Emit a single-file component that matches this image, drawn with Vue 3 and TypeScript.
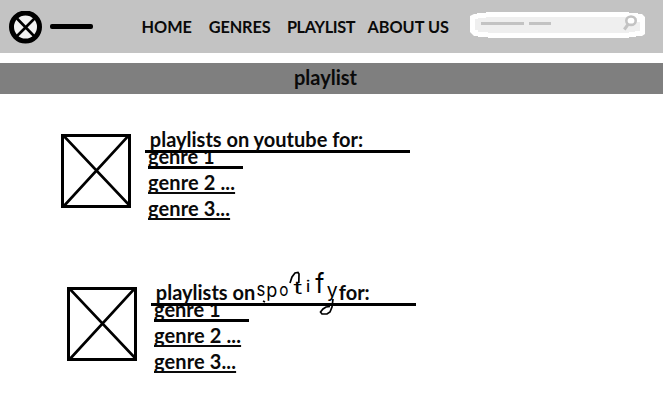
<script setup lang="ts">
interface Section {
  id: string
  before: string
  service?: string
  after?: string
  genres: string[]
}

const links: string[] = ['HOME', 'GENRES', 'PLAYLIST', 'ABOUT US']

const sections: Section[] = [
  { id: 'youtube', before: 'playlists on youtube for:', genres: ['genre 1', 'genre 2 ...', 'genre 3...'] },
  {
    id: 'spotify',
    before: 'playlists on',
    service: 'spotify',
    after: 'for:',
    genres: ['genre 1', 'genre 2 ...', 'genre 3...'],
  },
]

// Uneven placement of each handwritten letter: x, baseline, font size, horizontal stretch
const scribble: [number, number, number, number][] = [
  [1.6, 31, 18.5, 0.9],
  [11.2, 31.5, 19, 0.95],
  [24.2, 31, 18, 0.85],
  [38.6, 29, 17, 1.6],
  [50.8, 27, 16, 1.2],
  [60.2, 28, 26, 0.95],
  [71.8, 31.8, 19.5, 1],
]
</script>

<template>
  <div class="page">
    <header class="topbar">
      <svg class="logo" width="33" height="33" viewBox="0 0 33 33">
        <circle cx="16.5" cy="16" r="14" fill="#f2f2f2" stroke="#000" stroke-width="5" />
        <path d="M8 7.5 25 25M25.5 7.5 8 25" stroke="#000" stroke-width="2.6" />
      </svg>
      <span class="brand-line"></span>
      <nav class="nav">
        <a v-for="(link, i) in links" :key="link" :class="'link-' + i">{{ link }}</a>
      </nav>
      <svg class="search" width="176" height="27" viewBox="0 0 176 27">
        <path d="M7 1H16V0H159V1H168V2H172L175 5V22L172 24H166V25H159V26H18V25H8V24H4L0 20V4L4 2H7Z" fill="#fff" />
        <path d="M8 6H16V5H159V6H167V10H170V19H165V20H159V21H18V20H8V18H5V7H8Z" fill="#efefef" />
        <path d="M11 11.5H54M59 11.5H81" stroke="#c3c3c3" stroke-width="3" />
        <ellipse cx="161" cy="8.7" rx="4.7" ry="4.2" fill="#fff" stroke="#c3c3c3" stroke-width="2.6" />
        <path d="M158 12.5 154.3 17.5" stroke="#c3c3c3" stroke-width="3" />
      </svg>
    </header>

    <h1 class="title">playlist</h1>

    <main>
      <section v-for="s in sections" :key="s.id" class="card" :class="s.id">
        <svg class="thumb" width="70" height="74" viewBox="0 0 70 74">
          <rect x="1.5" y="1.5" width="67" height="71" fill="none" stroke="#000" stroke-width="3" />
          <path d="M1 0 69 72M69 0 2 73" stroke="#000" stroke-width="2.6" />
        </svg>
        <div class="body">
          <h2 class="heading">
            <span>{{ s.before }}</span>
            <span v-if="s.service" class="hand">
              <svg width="90" height="55" viewBox="0 0 90 55">
                <text
                  v-for="(p, i) in scribble"
                  :key="i"
                  :font-size="p[2]"
                  :transform="`translate(${p[0]} ${p[1]}) scale(${p[3]} 1)`"
                >{{ s.service[i] }}</text>
                <path d="M78 34 77 42 75 47 72 49 67 49 65.5 47 68 44 71 42 75 41.5" />
                <path d="M35 18 37 12 40 8 43 7.5 44 9 43.8 18" />
                <path d="M8 36 10 37" />
              </svg>
            </span>
            <span v-if="s.after">{{ s.after }}</span>
          </h2>
          <ul class="genres">
            <li v-for="g in s.genres" :key="g"><a>{{ g }}</a></li>
          </ul>
        </div>
      </section>
    </main>
  </div>
</template>

<style>
body {
  background: #fff;
}
</style>

<style scoped>
.page {
  height: 403px;
  overflow: hidden;
  background: #fff;
  color: #0a0a0a;
  font-family: Lato, 'Open Sans', sans-serif;
  font-weight: 700;
}
.topbar {
  display: flex;
  height: 53px;
  background: #c3c3c3;
}
.logo {
  margin: 11px 0 0 9px;
}
.brand-line {
  width: 43px;
  height: 5px;
  margin: 24px 0 0 8px;
  border-radius: 2px;
  background: #000;
}
.nav {
  display: flex;
  width: 377px;
  box-sizing: border-box;
  padding-left: 48.5px;
  font-size: 16.3px;
  line-height: 54px;
  white-space: nowrap;
}
.link-0 {
  width: 67.2px;
}
.link-1 {
  width: 78.2px;
  letter-spacing: -0.1px;
}
.link-2 {
  width: 80.5px;
  letter-spacing: -0.35px;
}
.search {
  margin-top: 12px;
}
.title {
  height: 31px;
  margin: 10px 0 0;
  padding-right: 12px;
  box-sizing: border-box;
  background: #7f7f7f;
  font-size: 20px;
  line-height: 29px;
  text-align: center;
}
.card {
  display: flex;
  height: 94px;
}
.youtube {
  margin: 32px 0 0 61px;
}
.spotify {
  margin: 59px 0 0 67px;
}
.thumb {
  margin-top: 8px;
}
.body {
  width: 265px;
  margin-left: 14px;
}
.heading {
  display: flex;
  height: 24px;
  margin: 0;
  padding-left: 4.8px;
  border-bottom: 3px solid #000;
  font-size: 20px;
  line-height: 26px;
  white-space: nowrap;
}
.hand {
  position: relative;
  width: 83.5px;
}
.hand svg {
  position: absolute;
  left: 0;
  top: -14px;
  overflow: visible;
}
.hand text {
  fill: #000;
  font-family: Inter, sans-serif;
  font-weight: 400;
}
.hand path {
  fill: none;
  stroke: #000;
  stroke-width: 1.7;
}
.genres {
  margin: 0 0 0 3px;
  padding: 0;
  list-style: none;
  font-size: 20px;
  line-height: 26px;
}
.genres a {
  text-decoration: underline;
  text-decoration-thickness: 1.5px;
  text-decoration-skip-ink: none;
  text-underline-offset: 2px;
}
.genres li + li {
  letter-spacing: 0.12px;
}
.genres li:first-child {
  width: 95px;
  height: 13px;
  overflow: hidden;
  border-bottom: 3px solid #000;
  line-height: 7px;
}
</style>
